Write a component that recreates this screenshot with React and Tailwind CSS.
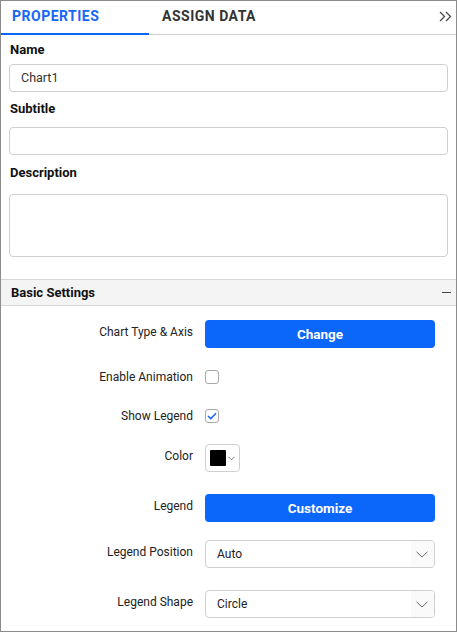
import React from "react";

function Chevron() {
  return (
    <svg width="12" height="7" viewBox="0 0 12 7" fill="none">
      <path d="M0.5 0.8 L6 6 L11.5 0.8" stroke="#6b6b6b" strokeWidth="1" />
    </svg>
  );
}

function Dropdown({ value }) {
  return (
    <div className="w-[230px] h-[28px] border border-[#cfcfcf] rounded-[4px] flex items-stretch overflow-hidden bg-white">
      <div className="flex-1 flex items-center pl-[11px] text-[12px] text-[#222]">{value}</div>
      <div className="w-[23px] bg-[#fafafa] flex items-center justify-center pr-[2px]">
        <Chevron />
      </div>
    </div>
  );
}

function Row({ label, children, className, shift = true }) {
  return (
    <div className={"flex items-center " + className}>
      <div className={"w-[192px] text-right text-[12px] leading-4 text-[#222] " + (shift ? "pb-[4px]" : "")}>{label}</div>
      <div className="ml-[12px] flex items-center">{children}</div>
    </div>
  );
}

function BlueButton({ children }) {
  return (
    <div className="w-[230px] h-[28px] rounded-[4px] bg-[#0b66fa] flex items-center justify-center text-white font-bold text-[13.5px]">
      {children}
    </div>
  );
}

export default function App() {
  return (
    <div
      className="w-[457px] h-[632px] border border-[#8c8c8c] bg-white flex flex-col overflow-hidden"
      style={{ fontFamily: "Roboto, 'Liberation Sans', sans-serif" }}
    >
      <div className="h-[34px] border-b border-[#cfcfcf] flex items-stretch relative shrink-0">
        <div className="w-[148px] relative flex items-center pl-[11px] pb-[3px] text-[14px] font-bold tracking-[0.5px] text-[#1766f5]">
          PROPERTIES
          <div className="absolute left-0 right-0 bottom-[-1px] h-[2px] bg-[#0b66fa]" />
        </div>
        <div className="flex items-center pl-[13px] pb-[3px] text-[14px] font-bold tracking-[0.5px] text-[#333]">
          ASSIGN DATA
        </div>
        <div className="ml-auto flex items-center pr-[4px] pb-[3px]">
          <svg width="13" height="11" viewBox="0 0 13 11" fill="none">
            <path d="M1 1 L5.5 5.5 L1 10" stroke="#4a4a4a" strokeWidth="1.3" />
            <path d="M7 1 L11.5 5.5 L7 10" stroke="#4a4a4a" strokeWidth="1.3" />
          </svg>
        </div>
      </div>

      <div className="px-[8px] flex flex-col shrink-0">
        <div className="pt-[7px] pl-[1px] text-[13px] leading-4 font-bold text-[#111]">Name</div>
        <div className="mt-[6px] h-[28px] border border-[#cfcfcf] rounded-[4px] flex items-center pl-[11px] text-[12.5px] text-[#333]">
          Chart1
        </div>
        <div className="mt-[9px] pl-[1px] text-[13px] leading-4 font-bold text-[#111]">Subtitle</div>
        <div className="mt-[10px] h-[28px] border border-[#cfcfcf] rounded-[4px]" />
        <div className="mt-[10px] pl-[1px] text-[13px] leading-4 font-bold text-[#111]">Description</div>
        <div className="mt-[13px] h-[63px] border border-[#cfcfcf] rounded-[4px]" />
      </div>

      <div className="mt-[22px] h-[27px] border-y border-[#d6d6d6] bg-[#f4f4f4] flex items-center pl-[10px] pr-[5px] shrink-0">
        <span className="text-[13px] font-bold text-[#111]">Basic Settings</span>
        <div className="ml-auto w-[9px] h-[1.5px] bg-[#444]" />
      </div>

      <div className="flex flex-col shrink-0">
        <Row label="Chart Type & Axis" className="mt-[14px] h-[28px]">
          <BlueButton>Change</BlueButton>
        </Row>
        <Row label="Enable Animation" className="mt-[22px] h-[14px]" shift={false}>
          <div className="w-[14px] h-[14px] border border-[#a9a9a9] rounded-[3px] bg-white" />
        </Row>
        <Row label="Show Legend" className="mt-[25px] h-[14px]" shift={false}>
          <div className="w-[14px] h-[14px] border border-[#a9a9a9] rounded-[3px] bg-white flex items-center justify-center">
            <svg width="10" height="8" viewBox="0 0 10 8" fill="none">
              <path d="M1 4 L3.8 6.6 L9 1.2" stroke="#1766f5" strokeWidth="1.5" />
            </svg>
          </div>
        </Row>
        <Row label="Color" className="mt-[21px] h-[28px]">
          <div className="w-[35px] h-[28px] border border-[#cfcfcf] rounded-[4px] flex items-center pl-[4px]">
            <div className="w-[16px] h-[16px] bg-black rounded-[1px]" />
            <svg className="ml-[2px]" width="7" height="5" viewBox="0 0 7 5" fill="none">
              <path d="M0.5 0.8 L3.5 3.8 L6.5 0.8" stroke="#6b6b6b" strokeWidth="0.9" />
            </svg>
          </div>
        </Row>
        <Row label="Legend" className="mt-[22px] h-[28px]">
          <BlueButton>Customize</BlueButton>
        </Row>
        <Row label="Legend Position" className="mt-[18px] h-[28px]">
          <Dropdown value="Auto" />
        </Row>
        <Row label="Legend Shape" className="mt-[22px] h-[28px]">
          <Dropdown value="Circle" />
        </Row>
      </div>
    </div>
  );
}
